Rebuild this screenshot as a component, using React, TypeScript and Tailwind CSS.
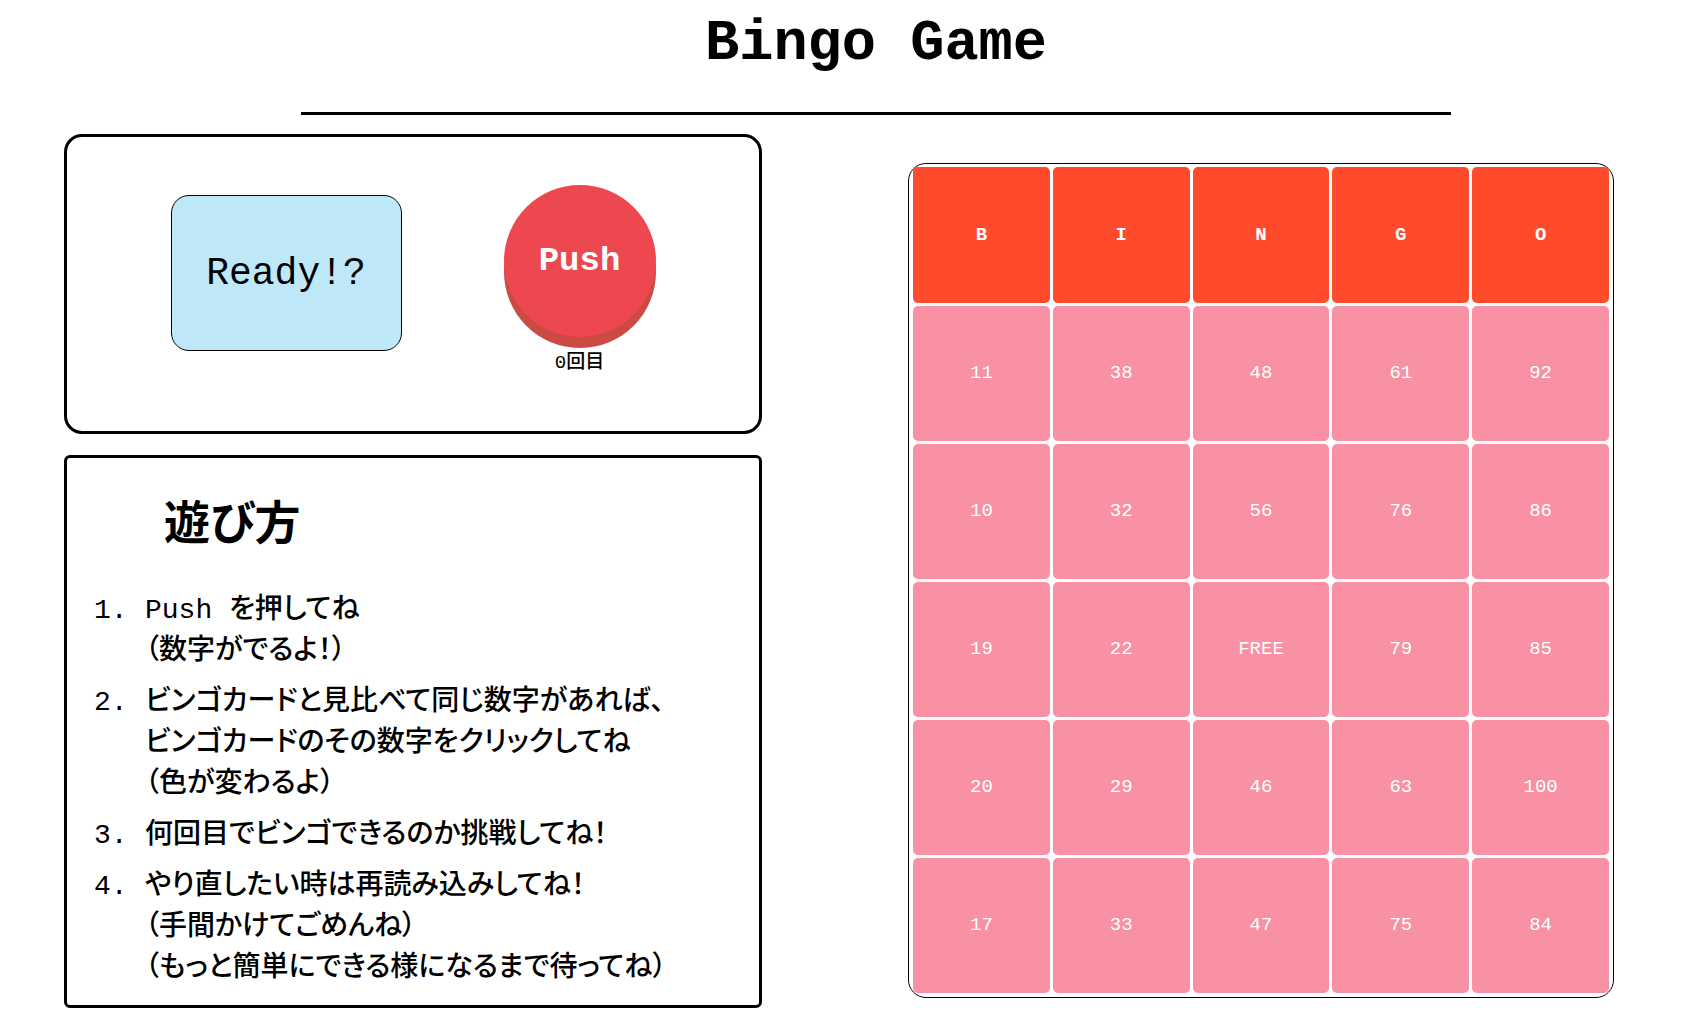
import { useState } from "react";

const HEADERS = ["B", "I", "N", "G", "O"];

const ROWS: string[][] = [
  ["11", "38", "48", "61", "92"],
  ["10", "32", "56", "76", "86"],
  ["19", "22", "FREE", "79", "85"],
  ["20", "29", "46", "63", "100"],
  ["17", "33", "47", "75", "84"],
];

const STEPS: string[][] = [
  ["Push を押してね", "（数字がでるよ！）"],
  [
    "ビンゴカードと見比べて同じ数字があれば、",
    "ビンゴカードのその数字をクリックしてね",
    "（色が変わるよ）",
  ],
  ["何回目でビンゴできるのか挑戦してね！"],
  [
    "やり直したい時は再読み込みしてね！",
    "（手間かけてごめんね）",
    "（もっと簡単にできる様になるまで待ってね）",
  ],
];

function DrawPanel() {
  const [drawn, setDrawn] = useState<number[]>([]);

  const push = () => {
    const rest = Array.from({ length: 100 }, (_, i) => i + 1).filter((n) => !drawn.includes(n));
    if (rest.length > 0) {
      setDrawn([...drawn, rest[Math.floor(Math.random() * rest.length)]]);
    }
  };

  return (
    <section className="flex h-[300px] items-start justify-center gap-[102px] rounded-[18px] border-[3px] border-black">
      <output className="mt-[58px] flex h-[156px] w-[231px] items-center justify-center rounded-[18px] border border-black bg-[#bee7f7] text-[38px]">
        {drawn.length > 0 ? drawn[drawn.length - 1] : "Ready!?"}
      </output>
      <div className="mt-12 flex flex-col items-center">
        <button
          type="button"
          onClick={push}
          className="size-[152px] rounded-full bg-[#ed484f] text-[34px] font-bold text-white shadow-[0_11px_0_#cb4a43]"
        >
          Push
        </button>
        <p className="mt-[14px] text-[19px] leading-6 font-medium">{drawn.length}回目</p>
      </div>
    </section>
  );
}

function HowToPlay() {
  return (
    <section className="rounded-md border-[3px] border-black px-[27px] pt-[39px] pb-4">
      <h2 className="ml-[70px] text-[46px] leading-[60px] font-bold">遊び方</h2>
      <ol className="mt-[33px] flex flex-col gap-[10px] text-[28px] leading-[41px] font-medium">
        {STEPS.map((lines, i) => (
          <li key={i} className="flex">
            <span className="w-[51px] shrink-0">{i + 1}.</span>
            <div>
              {lines.map((line) => (
                <p key={line}>{line}</p>
              ))}
            </div>
          </li>
        ))}
      </ol>
    </section>
  );
}

function BingoCard() {
  const [marked, setMarked] = useState<string[]>([]);
  const toggle = (v: string) =>
    setMarked(marked.includes(v) ? marked.filter((m) => m !== v) : [...marked, v]);

  return (
    <table className="w-full table-fixed border-separate border-spacing-[3px] rounded-[18px] border border-black p-px pt-0 text-[19px] text-white">
      <thead>
        <tr>
          {HEADERS.map((h) => (
            <th key={h} scope="col" className="h-[136px] rounded-[5px] bg-[#ff4b2b] p-0 font-bold">
              {h}
            </th>
          ))}
        </tr>
      </thead>
      <tbody>
        {ROWS.map((row) => (
          <tr key={row[0]}>
            {row.map((v) => (
              <td key={v} className="p-0">
                <button
                  type="button"
                  aria-pressed={marked.includes(v)}
                  onClick={() => toggle(v)}
                  className="block h-[135px] w-full rounded-[5px] bg-[#f791a3] aria-pressed:bg-[#ff4b2b]"
                >
                  {v}
                </button>
              </td>
            ))}
          </tr>
        ))}
      </tbody>
    </table>
  );
}

export default function App() {
  return (
    <div className="min-h-screen bg-white pb-5 font-['Liberation_Mono','Noto_Sans_CJK_JP',monospace] text-black [font-feature-settings:'palt']">
      <header className="ml-[51px] flex flex-col items-center">
        <h1 className="pt-2 text-[57px] leading-[72px] font-bold">Bingo Game</h1>
        <hr className="mt-8 w-full max-w-[1150px] border-t-[3px] border-black" />
      </header>
      <main className="mt-[19px] grid grid-cols-[698fr_706fr] items-start gap-[146px] pr-[87px] pl-16">
        <div className="flex flex-col gap-[21px]">
          <DrawPanel />
          <HowToPlay />
        </div>
        <div className="pt-[29px]">
          <BingoCard />
        </div>
      </main>
    </div>
  );
}
